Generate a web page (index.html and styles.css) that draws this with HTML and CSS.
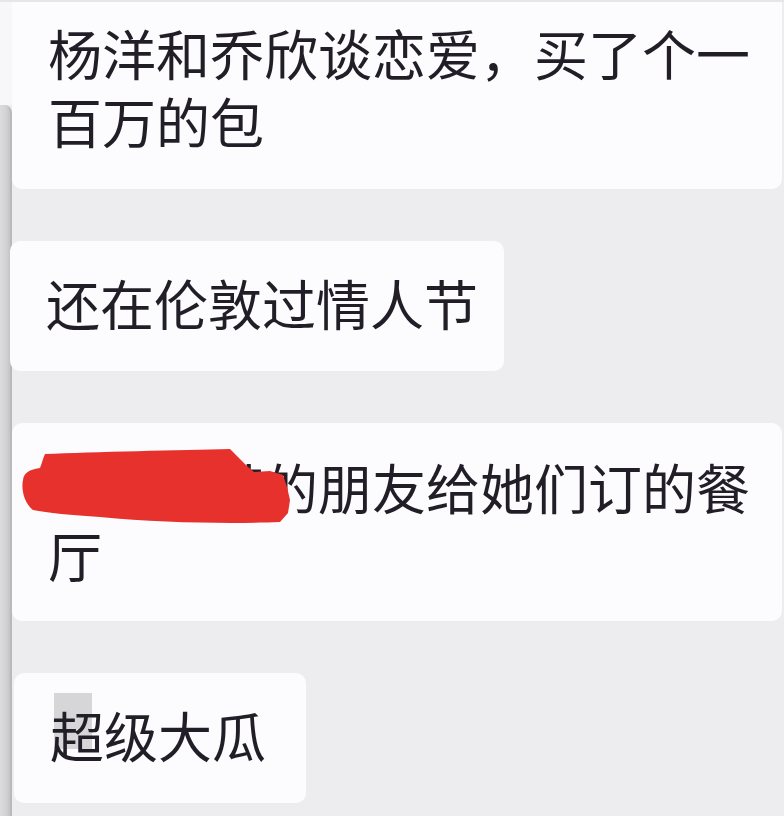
FILE: index.html
```html
<!DOCTYPE html>
<html lang="zh-CN">
  <head>
    <meta charset="UTF-8" />
    <meta name="viewport" content="width=device-width, initial-scale=1.0" />
    <title>聊天记录</title>
    <link rel="stylesheet" href="styles.css">
  </head>
  <body>
    <div class="screen">
      <div class="edge">
        <div class="edge-cap"></div>
        <div class="edge-rail"></div>
      </div>
      <div class="chat">
        <div class="bubble wide first">杨洋和乔欣谈恋爱，买了个一百万的包</div>
        <div class="bubble short">还在伦敦过情人节</div>
        <div class="bubble wide redacted">
          <svg class="blot" width="300" height="110" viewBox="0 0 300 110">
            <path d="M33 31 C80 29 170 27 218 26 L222 30 L235 43 L242 49 L258 48 L271 52 L275 64 L278 77 L276 90 L268 99 C220 101 150 100 88 94 C60 92 35 90 21 87 C12 80 9 66 11 57 C12 50 16 47 28 45 C30 40 31 35 33 31 Z" fill="#e6312d"/>
          </svg>
          某某某某的朋友给她们订的餐厅
        </div>
        <div class="bubble tiny"><span class="ghost"></span><span class="txt">超级大瓜</span></div>
      </div>
    </div>
  </body>
</html>
```

FILE: styles.css
```css
* {
  margin: 0;
  padding: 0;
  box-sizing: border-box;
}
body {
  background: #ededef;
  color: #221e27;
  font-family: "Noto Sans CJK SC", "Noto Sans", sans-serif;
  width: 784px;
  height: 816px;
  overflow: hidden;
}
.screen {
  display: flex;
  align-items: flex-start;
  border-top: 2px solid #e6e6e8;
}
.edge {
  width: 12px;
  flex-shrink: 0;
  display: flex;
  flex-direction: column;
}
.edge-cap {
  height: 103px;
  background: #f7f7f9;
}
.edge-rail {
  height: 720px;
  background: linear-gradient(90deg, #dcdcdf, #d2d2d5 60%, #c4c4c7);
  border-right: 2px solid #b9b9bd;
  border-radius: 0 8px 0 0;
}
.chat {
  flex: 1;
  display: flex;
  flex-direction: column;
  align-items: flex-start;
  gap: 52px;
  padding-right: 2px;
}
.bubble {
  position: relative;
  background: #fcfcfe;
  border-radius: 10px;
  font-size: 54px;
  line-height: 68px;
  padding: 28px 26px 34px 36px;
}
.bubble.wide {
  align-self: stretch;
  padding-right: 30px;
}
.bubble.first {
  padding-top: 17px;
  border-radius: 0 0 10px 10px;
}
.bubble.short {
  margin-left: -2px;
}
.bubble.redacted {
  padding-top: 30px;
  padding-bottom: 32px;
}
.blot {
  position: absolute;
  left: 0;
  top: 0;
}
.bubble.tiny {
  margin-left: 2px;
  padding-right: 40px;
}
.ghost {
  position: absolute;
  left: 40px;
  top: 20px;
  width: 38px;
  height: 56px;
  background: #d6d6d9;
}
.txt {
  position: relative;
}
```
